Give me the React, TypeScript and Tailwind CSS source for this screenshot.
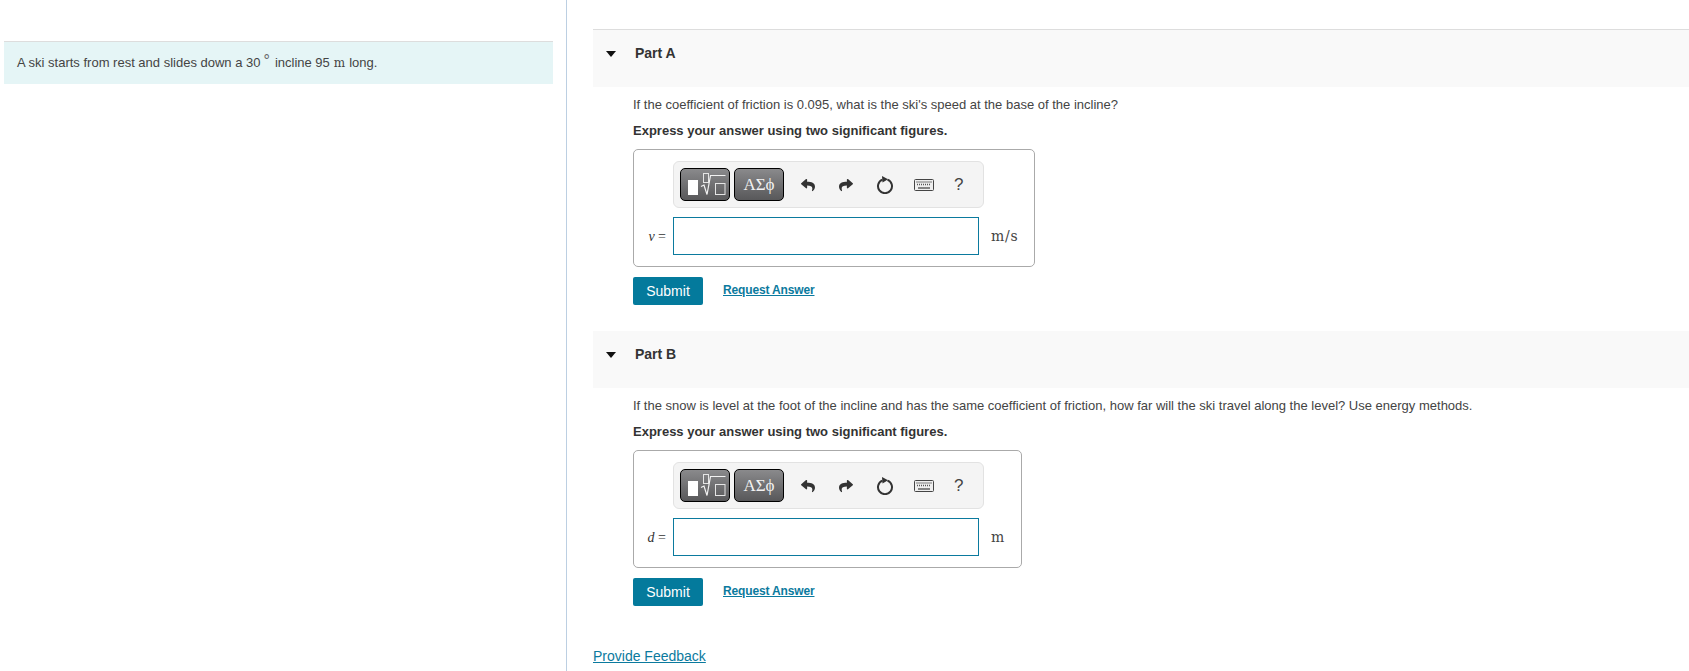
import { FaReply, FaShare } from 'react-icons/fa'

function RootIcon() {
  return (
    <svg width="48" height="31" viewBox="0 0 48 31" fill="none" className="block">
      <rect x="7" y="11" width="10" height="15" fill="#fff" />
      <rect x="22.500" y="4.500" width="5" height="9" stroke="#e5e5e5" strokeWidth="1" />
      <path d="M20 17.500l3 -1.500l3 9.500l3.500 -19h15" stroke="#f2f2f2" strokeWidth="1.200" />
      <rect x="34.500" y="14.500" width="9.500" height="11" stroke="#e5e5e5" strokeWidth="1" />
    </svg>
  )
}

function ResetIcon() {
  return (
    <svg width="18" height="18" viewBox="0 0 18 18" fill="none">
      <path d="M11.500 3.600a7 7 0 1 1 -5 0" stroke="#333" strokeWidth="2" />
      <path d="M6 0l6 3.200l-5.500 3.300z" fill="#333" />
    </svg>
  )
}

function KeyboardIcon() {
  return (
    <svg width="20" height="12" viewBox="0 0 20 12" fill="none">
      <rect x="0.500" y="0.500" width="19" height="11" rx="1" fill="#eee" stroke="#444" />
      <path d="M2.500 3h15M3 5.500h14" stroke="#555" strokeWidth="1.300" strokeDasharray="1 1" />
      <path d="M4 9h12" stroke="#555" strokeWidth="1.400" />
    </svg>
  )
}

function AnswerBox({ variable, unit }: { variable: string; unit: string }) {
  return (
    <div className="inline-block rounded-[5px] border border-[#aaa] pt-[11px] pb-[11px] pr-4 align-top">
      <div className="ml-[39px] flex h-[47px] w-[311px] items-center rounded-[6px] border border-[#e2e2e2] bg-[#f4f4f4] pl-[6px]">
        <div className="flex h-[33px] w-[50px] items-center justify-center rounded-[5px] border border-black bg-gradient-to-b from-[#8a8a8c] to-[#58585a]">
          <RootIcon />
        </div>
        <div className="ml-[4px] flex h-[33px] w-[50px] items-center justify-center rounded-[5px] border border-black bg-gradient-to-b from-[#8a8a8c] to-[#58585a] font-['Liberation_Serif',serif] text-[17px] text-[#f2f2f2]">
          ΑΣϕ
        </div>
        <div className="ml-[16px] flex w-[15px] justify-center text-[#333]"><FaReply size={14} /></div>
        <div className="ml-[23px] flex w-[15px] justify-center text-[#333]"><FaShare size={14} /></div>
        <div className="ml-[23px] flex w-[18px] justify-center"><ResetIcon /></div>
        <div className="ml-[20px] flex w-[20px] justify-center"><KeyboardIcon /></div>
        <div className="ml-[20px] text-[17px] text-[#444]">?</div>
      </div>
      <div className="mt-[9px] flex items-center">
        <div className="w-[39px] pr-[7px] text-right font-['Liberation_Serif',serif] text-[14px] text-[#333]">
          <i>{variable}</i> =
        </div>
        <div className="h-[38px] w-[306px] border border-[#0b7a9e] bg-white" />
        <div className="ml-[12px] font-['DejaVu_Serif',serif] text-[14px] tracking-[0.7px] text-[#444]">{unit}</div>
      </div>
    </div>
  )
}

function Part({ title, question, variable, unit }: { title: string; question: string; variable: string; unit: string }) {
  return (
    <section className="mb-[26px]">
      <div className="flex h-[57px] items-start bg-[#f9f9f9] pt-[14px]">
        <div className="ml-[13px] mt-[7px] h-0 w-0 border-x-[5.500px] border-t-[6px] border-x-transparent border-t-[#111]" />
        <h2 className="ml-[19px] text-[14px] font-bold leading-[18px] text-[#333]">{title}</h2>
      </div>
      <div className="pl-[40px]">
        <p className="mt-[9px] text-[13px] leading-[18px] text-[#444]">{question}</p>
        <p className="mt-[8px] text-[13px] leading-[18px] font-bold text-[#333]">
          Express your answer using two significant figures.
        </p>
        <div className="mt-[9px]">
          <AnswerBox variable={variable} unit={unit} />
        </div>
        <div className="mt-[10px] flex items-start">
          <button className="h-[28px] w-[70px] rounded-[2px] bg-[#047a9c] text-[14px] text-white">Submit</button>
          <a className="ml-[20px] mt-[5px] text-[12px] font-bold leading-[16px] tracking-[-0.15px] text-[#0b7a9e] underline">Request Answer</a>
        </div>
      </div>
    </section>
  )
}

export default function App() {
  return (
    <div className="flex h-[671px] overflow-hidden bg-white font-['Liberation_Sans',Arial,sans-serif]">
      <aside className="w-[567px] shrink-0 border-r border-[#bccfe2] pl-[4px] pr-[13px] pt-[41px]">
        <div className="flex h-[43px] items-center border-t border-[#ddd] bg-[#e5f5f6] pl-[13px] text-[13px] text-[#444]">
          A ski starts from rest and slides down a 30
          <span className="ml-[3px] -mt-[4px] text-[16px] leading-none text-[#666]">°</span>
          <span className="ml-[5px]">incline 95</span>
          <span className="ml-[4px] font-['DejaVu_Serif',serif] text-[12px]">m</span>
          <span className="ml-[4px]">long.</span>
        </div>
      </aside>
      <main className="ml-[26px] flex-1 pt-[29px]">
        <div className="border-t border-[#ddd]">
          <Part
            title="Part A"
            question="If the coefficient of friction is 0.095, what is the ski's speed at the base of the incline?"
            variable="v"
            unit="m/s"
          />
        </div>
        <Part
          title="Part B"
          question="If the snow is level at the foot of the incline and has the same coefficient of friction, how far will the ski travel along the level? Use energy methods."
          variable="d"
          unit="m"
        />
        <a className="mt-[40px] block text-[14px] leading-[20px] text-[#0b7a9e] underline">Provide Feedback</a>
      </main>
    </div>
  )
}
